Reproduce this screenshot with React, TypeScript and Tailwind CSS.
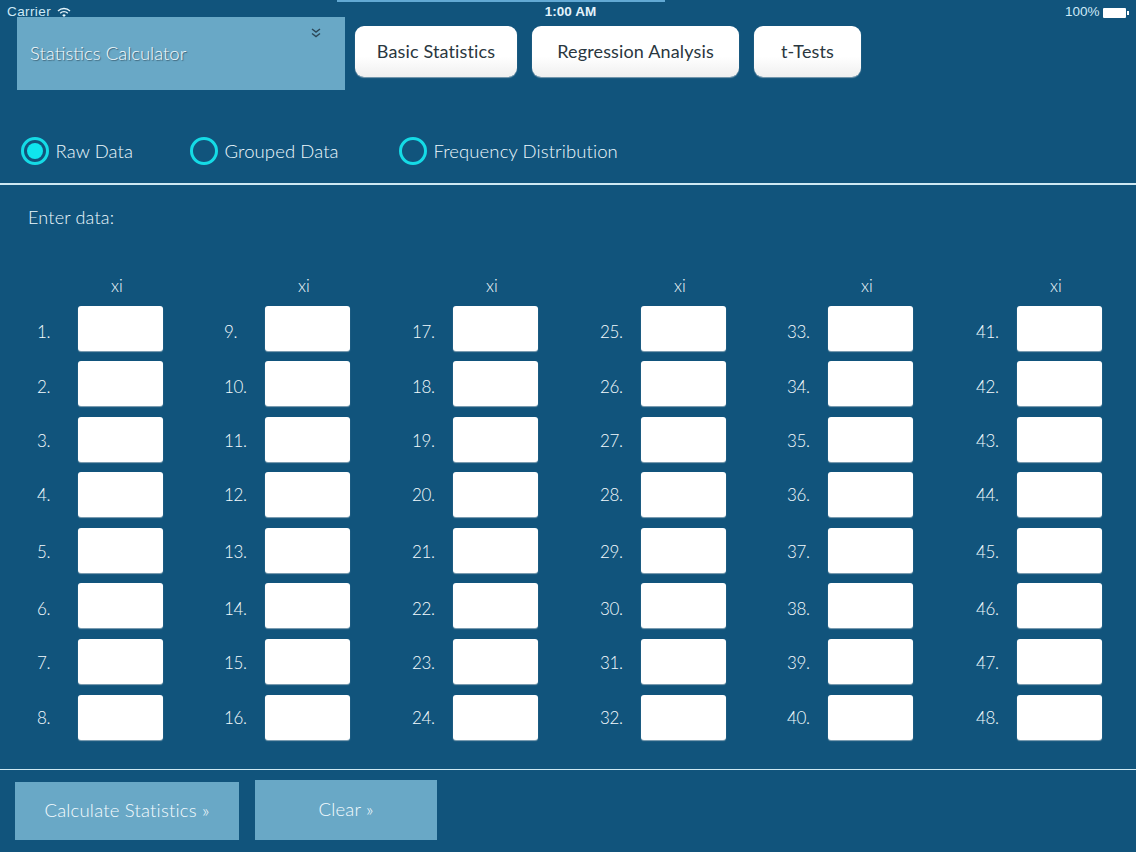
import React from 'react';

const COLUMNS = [0, 1, 2, 3, 4, 5];
const ROWS = [0, 1, 2, 3, 4, 5, 6, 7];
// the row numbers don't sit on one line with their inputs in the screen
const LABEL_NUDGE = [1, 0.5, -1, -3, -2, 0, -1.5, -2];

const TabButton = ({ label, width }: { label: string; width: string }) => (
  <button className={`${width} h-[51px] rounded-[9px] bg-gradient-to-b from-white from-60% to-[#efefef] text-[18px] tracking-[0.15px] text-[#2a3740] shadow-[0_1px_1px_#7d9db1]`}>
    {label}
  </button>
);

const Radio = ({ label, checked, width }: { label: string; checked?: boolean; width: string }) => (
  <div className={`${width} flex items-center gap-[6.5px]`}>
    <span className="flex h-[28px] w-[28px] items-center justify-center rounded-full border-[3px] border-[#15dbe6]">
      {checked && <span className="h-[16px] w-[16px] rounded-full bg-[#0fe5ee]" />}
    </span>
    <span className="text-[18.5px] font-light leading-[24px] tracking-[0.1px] text-[#eef9fe]">{label}</span>
  </div>
);

const DataColumn = ({ column }: { column: number }) => (
  <div className="flex flex-col">
    <div className="h-[30px] pl-[41px] pt-[1px] text-center text-[17px] font-light leading-[18px] text-[#f4fbfe]">
      <span className="block w-[78px]">xi</span>
    </div>
    <div className="flex flex-col gap-[10.6px]">
      {ROWS.map((row) => (
        <div key={row} className="flex h-[45px] items-center">
          <span
            className="w-[41px] text-[17px] font-light tracking-[-0.4px] text-[#f4fbfe]"
            style={{ paddingTop: 6 + LABEL_NUDGE[row] * 2 + 'px' }}
          >
            {column * 8 + row + 1}.
          </span>
          <div className="h-[45px] w-[84.7px] rounded-[3px] bg-white shadow-[0_1px_1px_#86a4b6]" />
        </div>
      ))}
    </div>
  </div>
);

export default function App() {
  return (
    <div
      className="relative flex h-[852px] w-[1136px] flex-col overflow-hidden bg-[#11547c]"
      style={{ fontFamily: '"Lato", "Open Sans", sans-serif' }}
    >
      {/* loading bar + status bar sit over the header */}
      <div className="absolute left-[337px] top-0 h-[1.5px] w-[328px] bg-[#62a9d4]" />
      <div className="absolute left-0 right-0 top-[4px] flex h-[17px] items-center justify-between pl-[7px] pr-[7px] text-[13.5px] text-[#cfeaf7]" style={{ fontFamily: '"Liberation Sans", sans-serif' }}>
        <div className="flex w-[200px] items-center gap-[6px]">
          <span className="tracking-[0.4px]">Carrier</span>
          <svg width="14" height="11" viewBox="0 0 14 11" fill="none" stroke="#e8f6fc" strokeWidth="1.4">
            <path d="M1 4 A8.5 8.5 0 0 1 13 4" />
            <path d="M3.2 6.2 A5.4 5.4 0 0 1 10.8 6.2" />
            <path d="M7 10 L5.2 8.2 A2.6 2.6 0 0 1 8.8 8.2 Z" fill="#e8f6fc" stroke="none" />
          </svg>
        </div>
        <span className="ml-[5px] font-bold text-[#e3f3fb]">1:00 AM</span>
        <div className="flex w-[200px] items-center justify-end">
          <span className="mr-[4px]">100%</span>
          <span className="h-[10px] w-[23px] rounded-[1px] bg-white" />
          <span className="ml-[1px] h-[4px] w-[1.5px] bg-white" />
        </div>
      </div>

      <header className="flex items-start pl-[17px] pt-[17px]">
        <div className="relative flex h-[73px] w-[328px] items-center bg-[#69a8c6] pl-[13px]">
          <span className="text-[18.5px] font-light text-[#f4fafc] [text-shadow:1px_1px_1px_#3a5f73]">Statistics Calculator</span>
          <svg className="absolute right-[24px] top-[11px]" width="10" height="10" viewBox="0 0 10 10" fill="none" stroke="#2c4656" strokeWidth="1.4">
            <path d="M1 1 L5 4 L9 1" />
            <path d="M1 5.5 L5 8.5 L9 5.5" />
          </svg>
        </div>
        <div className="ml-[10px] mt-[9px] flex gap-[15px]">
          <TabButton label="Basic Statistics" width="w-[162px]" />
          <TabButton label="Regression Analysis" width="w-[207px]" />
          <TabButton label="t-Tests" width="w-[107px]" />
        </div>
      </header>

      <div className="mt-[47px] flex items-center pl-[21px]">
        <Radio label="Raw Data" checked width="w-[169px]" />
        <Radio label="Grouped Data" width="w-[209px]" />
        <Radio label="Frequency Distribution" width="w-auto" />
      </div>

      <div className="mt-[18px] h-[1.5px] bg-[#cfe9f3]" />

      <p className="pl-[28px] pt-[22px] text-[18px] font-light leading-[20px] tracking-[0.2px] text-[#eef9fe]">Enter data:</p>

      <div className="grid grid-cols-[187px_188px_188px_187px_189px_1fr] pl-[37px] pt-[49px]">
        {COLUMNS.map((column) => (
          <DataColumn key={column} column={column} />
        ))}
      </div>

      <div className="mt-[29px] h-[1.5px] bg-[#cfe9f3]" />

      <footer className="flex items-start gap-[16px] pl-[15px] pt-[10px]">
        <button className="mt-[2px] h-[58px] w-[224px] bg-[#69a8c6] text-[18.5px] font-light tracking-[0.2px] text-[#f4fbfe]">Calculate Statistics »</button>
        <button className="h-[60px] w-[182px] bg-[#69a8c6] text-[18.5px] font-light tracking-[0.2px] text-[#f4fbfe]">Clear »</button>
      </footer>
    </div>
  );
}
